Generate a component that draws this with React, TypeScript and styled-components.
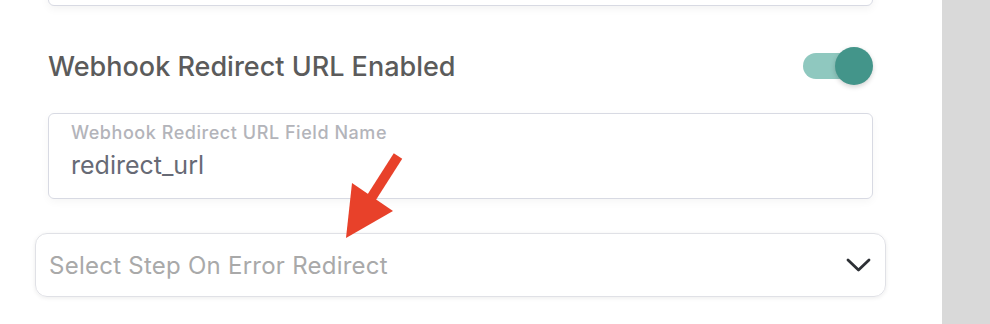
import React from "react";
import styled, { createGlobalStyle } from "styled-components";

const Global = createGlobalStyle`
  html, body { margin: 0; padding: 0; background: #ffffff; }
  body { font-family: Inter, "Noto Sans", sans-serif; overflow: hidden; }
  * { box-sizing: border-box; }
`;

const Page = styled.div`
  display: flex;
  width: 990px;
  height: 324px;
  overflow: hidden;
`;

const Main = styled.div`
  position: relative;
  width: 942px;
  padding: 0 69px 0 48px;
  display: flex;
  flex-direction: column;
  background: #ffffff;
`;

const SidePanel = styled.div`
  flex: 1;
  background: #d9d9d9;
`;

const TopCard = styled.div`
  margin-top: -40px;
  height: 46px;
  border: 1px solid #d8dae3;
  border-radius: 6px;
  background: #fff;
  box-shadow: 0 3px 8px rgba(0, 0, 0, 0.05);
`;

const SettingRow = styled.div`
  margin-top: 40px;
  height: 40px;
  display: flex;
  align-items: center;
  justify-content: space-between;
`;

const SettingTitle = styled.div`
  font-size: 27px;
  font-weight: 500;
  color: #5b5b5b;
  letter-spacing: 0;
`;

const Switch = styled.div`
  position: relative;
  width: 60px;
  height: 26px;
  margin-right: 10px;
  border-radius: 13px;
  background: #8fc8bf;
`;

const Knob = styled.div`
  position: absolute;
  right: -10px;
  top: -6px;
  width: 38px;
  height: 38px;
  border-radius: 50%;
  background: #43958a;
  box-shadow: 0 2px 5px rgba(0, 0, 0, 0.18);
`;

const FieldBox = styled.div`
  margin-top: 27px;
  height: 86px;
  border: 1px solid #d8dae3;
  border-radius: 6px;
  padding: 8px 22px 0;
  display: flex;
  flex-direction: column;
  box-shadow: 0 3px 8px rgba(0, 0, 0, 0.04);
`;

const FieldLabel = styled.div`
  font-size: 18px;
  line-height: 22px;
  color: #b3b4ba;
  font-weight: 500;
  letter-spacing: 0.55px;
`;

const FieldValue = styled.div`
  margin-top: 6px;
  font-size: 25px;
  line-height: 30px;
  color: #676a75;
`;

const SelectBox = styled.div`
  margin: 34px -13px 0;
  height: 64px;
  border: 1px solid #e0e1e6;
  border-radius: 12px;
  padding: 0 14px 0 13px;
  display: flex;
  align-items: center;
  justify-content: space-between;
  box-shadow: 0 1px 4px rgba(0, 0, 0, 0.08);
`;

const Placeholder = styled.div`
  font-size: 24px;
  color: #a9a9a9;
  letter-spacing: 0.25px;
`;

const Chevron = styled.svg`
  width: 25px;
  height: 14px;
  margin-top: -1px;
`;

const Annotation = styled.svg`
  position: absolute;
  left: 330px;
  top: 145px;
  width: 80px;
  height: 100px;
  overflow: visible;
`;

export default function App() {
  return (
    <Page>
      <Global />
      <Main>
        <TopCard />
        <SettingRow>
          <SettingTitle>Webhook Redirect URL Enabled</SettingTitle>
          <Switch>
            <Knob />
          </Switch>
        </SettingRow>
        <FieldBox>
          <FieldLabel>Webhook Redirect URL Field Name</FieldLabel>
          <FieldValue>redirect_url</FieldValue>
        </FieldBox>
        <SelectBox>
          <Placeholder>Select Step On Error Redirect</Placeholder>
          <Chevron viewBox="0 0 25 14">
            <polyline
              points="2,2 12.5,12 23,2"
              fill="none"
              stroke="#2d3035"
              strokeWidth="2.8"
              strokeLinecap="round"
              strokeLinejoin="round"
            />
          </Chevron>
        </SelectBox>
        <Annotation viewBox="0 0 80 100">
          <line x1="68" y1="11" x2="38" y2="58" stroke="#e8412a" strokeWidth="10" />
          <polygon points="22,38 63,66 16,93" fill="#e8412a" />
        </Annotation>
      </Main>
      <SidePanel />
    </Page>
  );
}
